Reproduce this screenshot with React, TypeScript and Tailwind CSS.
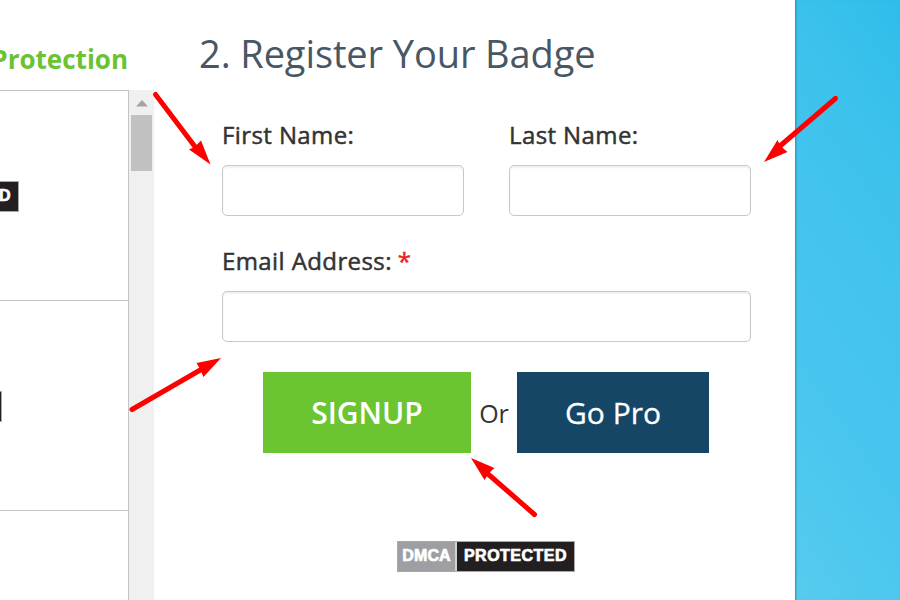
import { useState } from 'react';

interface TextFieldProps {
  id: string;
  label: string;
  value: string;
  onChange: (value: string) => void;
  required?: boolean;
  type?: string;
}

const TextField = ({ id, label, value, onChange, required = false, type = 'text' }: TextFieldProps) => {
  return (
    <div className="flex flex-col">
      <label htmlFor={id} className="flex h-[50px] gap-[6px] text-[24px] leading-[40px] tracking-[0.4px] text-[#333333] whitespace-nowrap [-webkit-text-stroke:0.5px_currentColor]">
        {label} {required && <span className="text-[#ed1c24]">*</span>}
      </label>
      <input
        id={id}
        type={type}
        value={value}
        onChange={(e) => onChange(e.target.value)}
        className="h-[51px] w-full rounded-[5px] border border-[#c8c8c8] bg-white px-3 text-[22px] shadow-[inset_0_2px_2px_rgba(0,0,0,0.06)] focus:outline-none"
      />
    </div>
  );
};

const DmcaBadge = () => {
  return (
    <div className="flex h-[31px] w-[178px] shrink-0 gap-[2px] border border-[#a8a8aa] bg-[#d0d0d2] font-['Liberation_Sans',sans-serif] text-[16px] leading-[28px] font-bold text-white [-webkit-text-stroke:0.7px_currentColor]">
      <span className="flex w-[57px] justify-center bg-[#9d9fa2] tracking-[0.1px]">DMCA</span>
      <span className="flex flex-1 justify-center bg-[#231f20] tracking-[0.5px]">PROTECTED</span>
    </div>
  );
};

const BadgeList = () => {
  return (
    <div className="flex w-[154px] shrink-0 flex-col overflow-hidden">
      <div className="flex h-[90px] justify-end pr-[26px]">
        <h2 className="pt-[39px] text-[26px] leading-[40px] font-bold text-[#6ac331]">Protection</h2>
      </div>
      <div className="flex flex-1">
        <div className="flex w-[129px] flex-col border-t border-r border-[#c4c4c4]">
          <div className="flex h-[210px] shrink-0 items-center justify-end overflow-hidden border-b border-[#c4c4c4] pt-px pr-[109px]">
            <DmcaBadge />
          </div>
          <div className="flex h-[210px] shrink-0 items-center justify-end overflow-hidden border-b border-[#c4c4c4] pt-px pr-[126px]">
            <DmcaBadge />
          </div>
        </div>
        {/* Scrollbar */}
        <div className="flex w-[25px] flex-col items-center bg-[#f0f0f0]">
          <svg width="12" height="7" viewBox="0 0 12 7" className="mt-[10px]">
            <path d="M0 6.5 L6 0 L12 6.5 Z" fill="#a3a3a3" />
          </svg>
          <div className="mt-2 h-[56px] w-[21px] bg-[#c1c1c1]" />
        </div>
      </div>
    </div>
  );
};

// Arrow shafts run from the round tail to the base of the head
const arrows = [
  { tail: [155.5, 94.5], base: [196, 148], head: '210.5,164.5 189,149.5 194.5,147 201,140.5' },
  { tail: [835.5, 98.5], base: [780, 146], head: '764,162 777.5,140 780.5,146 787.5,152' },
  { tail: [132, 409.5], base: [202, 369], head: '221,358 196.5,363 200,369 203.5,377' },
  { tail: [534.5, 514.5], base: [488, 474], head: '471,458 494.5,468 489,473 484.5,480' },
];

const Arrows = () => {
  return (
    <svg width="900" height="600" viewBox="0 0 900 600" className="pointer-events-none absolute inset-0">
      {arrows.map(({ tail, base, head }, index) => (
        <g key={index} fill="#ff0000">
          <line x1={tail[0]} y1={tail[1]} x2={base[0]} y2={base[1]} stroke="#ff0000" strokeWidth="5" strokeLinecap="round" />
          <polygon points={head} />
        </g>
      ))}
    </svg>
  );
};

export default function App() {
  const [firstName, setFirstName] = useState('');
  const [lastName, setLastName] = useState('');
  const [email, setEmail] = useState('');

  return (
    <div className="relative flex h-[600px] w-[900px] overflow-hidden bg-white font-['Open_Sans',sans-serif]">
      <BadgeList />

      <main className="flex flex-1 flex-col">
        <h1 className="h-[115px] pt-[27px] pl-[45px] text-[38px] leading-[52px] tracking-[-0.1px] whitespace-nowrap text-[#485764]">
          2. Register Your Badge
        </h1>
        <form onSubmit={(e) => e.preventDefault()} className="flex flex-col pr-[44px] pl-[68px]">
          <div className="grid grid-cols-2 gap-x-[45px]">
            <TextField id="first-name" label="First Name:" value={firstName} onChange={setFirstName} />
            <TextField id="last-name" label="Last Name:" value={lastName} onChange={setLastName} />
          </div>
          <div className="mt-[25px]">
            <TextField id="email" label="Email Address:" value={email} onChange={setEmail} type="email" required />
          </div>
          <div className="mt-[30px] flex items-center pl-[41px]">
            <button type="submit" className="h-[81px] w-[208px] bg-[#6ac531] text-[30px] font-semibold text-white">
              SIGNUP
            </button>
            <span className="w-[46px] pt-[3px] text-center text-[25px] text-[#333333]">Or</span>
            <button type="button" className="h-[81px] w-[192px] bg-[#164666] text-[30px] text-white [-webkit-text-stroke:0.3px_currentColor]">
              Go Pro
            </button>
          </div>
        </form>
        <div className="mt-[88px] flex pl-[243px]">
          <DmcaBadge />
        </div>
      </main>

      <aside className="w-[105px] shrink-0 border-l border-[#4796af] bg-[linear-gradient(235deg,#2fbdeb_0%,#3dc2ec_25%,#4ac6ef_72%,#56cbed_100%)] shadow-[inset_1px_0_1px_rgba(0,60,80,0.15)]" />

      <Arrows />
    </div>
  );
}
